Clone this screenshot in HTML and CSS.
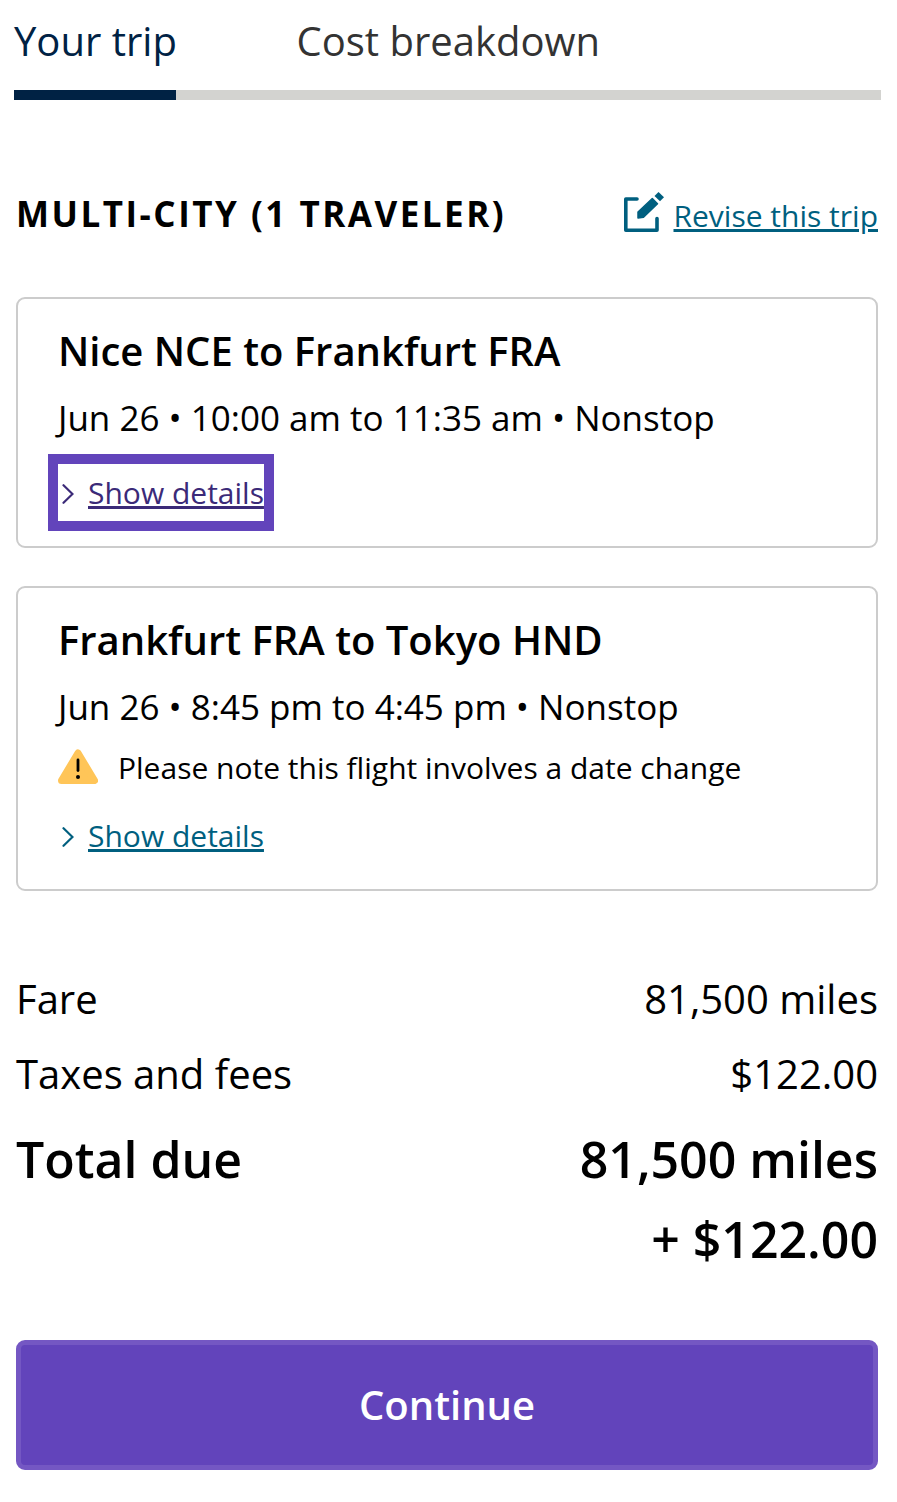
FILE: index.html
```html
<!DOCTYPE html>
<html lang="en">
  <head>
    <meta charset="UTF-8" />
    <meta name="viewport" content="width=device-width, initial-scale=1.0" />
    <title>Your trip</title>
    <link rel="stylesheet" href="styles.css">
  </head>
  <body>
    <div class="tabs">
      <a class="tab active">Your trip</a>
      <a class="tab">Cost breakdown</a>
    </div>

    <div class="trip-header">
      <h1>MULTI-CITY (1 TRAVELER)</h1>
      <a class="revise">
        <svg class="edit-icon" width="42" height="42" viewBox="0 0 42 42">
          <path d="M15 7H3.800V38.300H35V26.500" fill="none" stroke="#005f7f" stroke-width="3.600" stroke-linecap="round" stroke-linejoin="round" />
          <path d="M16 20L30.300 6.500L35.500 11.700L21.500 25.300L16 26Z" fill="#005f7f" stroke="#005f7f" stroke-width="1.500" stroke-linejoin="round" />
          <path d="M32.500 4L36.500 0L42 5.200L38 9.300Z" fill="#005f7f" />
        </svg>
        <span class="link">Revise this trip</span>
      </a>
    </div>

    <div class="flight">
      <h2>Nice NCE to Frankfurt FRA</h2>
      <p class="times">Jun 26 • 10:00 am to 11:35 am • Nonstop</p>
      <a class="details focused">
        <svg class="chevron" width="12" height="20" viewBox="0 0 12 20">
          <path d="M1.500 1.200L10.500 10L1.500 18.800" />
        </svg>
        <span class="link">Show details</span>
      </a>
    </div>

    <div class="flight second">
      <h2>Frankfurt FRA to Tokyo HND</h2>
      <p class="times">Jun 26 • 8:45 pm to 4:45 pm • Nonstop</p>
      <p class="notice">
        <svg class="warning-icon" width="40" height="36" viewBox="0 0 40 36">
          <path d="M20 4L36.500 31.500H3.500Z" fill="#ffc558" stroke="#ffc558" stroke-width="7" stroke-linejoin="round" />
          <path d="M20 11V21.500" fill="none" stroke="#000" stroke-width="2.800" stroke-linecap="round" />
          <circle cx="20" cy="28" r="2" />
        </svg>
        <span>Please note this flight involves a date change</span>
      </p>
      <a class="details">
        <svg class="chevron" width="12" height="20" viewBox="0 0 12 20">
          <path d="M1.500 1.200L10.500 10L1.500 18.800" />
        </svg>
        <span class="link">Show details</span>
      </a>
    </div>

    <div class="costs">
      <div class="row"><span>Fare</span><span>81,500 miles</span></div>
      <div class="row"><span>Taxes and fees</span><span>$122.00</span></div>
      <div class="row total"><span>Total due</span><span>81,500 miles<br>+ $122.00</span></div>
    </div>

    <button class="continue">Continue</button>
  </body>
</html>
```
FILE: styles.css
```css
* {
  box-sizing: border-box;
}
body {
  font-family: "Open Sans", sans-serif;
  margin: 0;
  padding: 0 19px 0 16px;
  background-color: #fff;
  color: #000;
}
h1,
h2,
p {
  margin: 0;
}
.tabs {
  display: flex;
  gap: 120.5px;
  height: 100px;
  margin: 0 -3px 0 -2px;
  box-shadow: inset 0 -10px #d3d3d0;
}
.tab {
  padding-top: 13px;
  font-size: 40px;
  line-height: 55px;
  color: #333;
}
.tab.active {
  width: 162px;
  white-space: nowrap;
  color: #002244;
  border-bottom: 10px solid #002244;
}
.trip-header {
  display: flex;
  justify-content: space-between;
  margin-top: 88px;
  height: 50px;
}
h1 {
  font-size: 35px;
  line-height: 51px;
  letter-spacing: 2.5px;
}
.revise {
  display: flex;
  gap: 10px;
  color: #005f7f;
  font-size: 30px;
  line-height: 55px;
}
.edit-icon {
  margin-top: 4px;
}
.link {
  text-decoration: underline;
}
.flight {
  height: 251px;
  margin-top: 59px;
  padding: 25px 40px 0;
  border: 2px solid #ccc;
  border-radius: 9px;
}
.flight.second {
  height: 305px;
  margin-top: 38px;
}
h2 {
  font-size: 40px;
  font-weight: 600;
  line-height: 54px;
}
.times {
  margin-top: 16px;
  font-size: 35px;
  line-height: 48px;
}
.notice {
  display: flex;
  align-items: center;
  gap: 20px;
  margin-top: 17px;
  font-size: 30px;
  line-height: 40px;
}
.warning-icon {
  margin-top: -3px;
}
.details {
  display: inline-flex;
  align-items: center;
  gap: 14px;
  margin-top: 28px;
  padding-left: 4px;
  font-size: 30px;
  line-height: 40px;
  color: #005f7f;
}
.details.focused {
  height: 57px;
  margin-top: 22px;
  color: #3b2a78;
  outline: 10px solid #6244bb;
}
.chevron {
  margin-top: 2px;
}
.chevron path {
  fill: none;
  stroke: currentColor;
  stroke-width: 2.2;
  stroke-linecap: round;
}
.costs {
  margin-top: 70px;
}
.row {
  display: flex;
  justify-content: space-between;
  font-size: 40px;
  line-height: 75px;
  text-align: right;
}
.row.total {
  margin-top: 8px;
  font-size: 50px;
  font-weight: 600;
  line-height: 80px;
}
.continue {
  display: block;
  width: 100%;
  height: 130px;
  margin-top: 61px;
  padding: 0 0 2px;
  border: 5px solid #7457c3;
  border-radius: 9px;
  background-color: #6244bb;
  color: #fff;
  font-family: inherit;
  font-size: 40px;
  font-weight: 600;
}
```
